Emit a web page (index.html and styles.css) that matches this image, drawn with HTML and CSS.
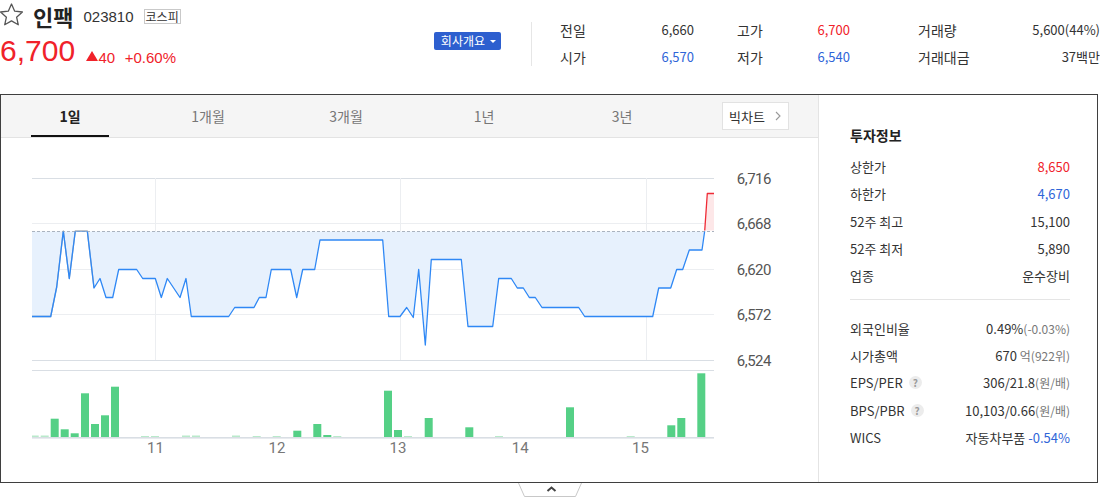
FILE: index.html
```html
<!DOCTYPE html>
<html>
<head>
  <meta charset="utf-8">
  <title>인팩 - 023810</title>
  <link rel="stylesheet" href="styles.css">
</head>
<body>
  <div class="page">
    <header class="stock-head">
      <div class="title-block">
        <div class="name-row">
          <svg class="star" viewBox="0 0 24 24">
            <polygon points="11.5,2 14.7,9.2 22.4,10 16.6,15.2 18.3,22.8 11.5,18.9 4.7,22.8 6.4,15.2 0.6,10 8.3,9.2"/>
          </svg>
          <h1 class="name">인팩</h1>
          <span class="code">023810</span>
          <span class="market">코스피</span>
        </div>
        <div class="price-row">
          <strong class="price">6,700</strong>
          <span class="diff"><i class="tri"></i>40</span>
          <span class="rate">+0.60%</span>
        </div>
      </div>
      <button class="company-btn">회사개요<i class="caret"></i></button>
      <span class="divider"></span>
      <div class="stats">
        <div class="stat"><span>전일</span><b>6,660</b></div>
        <div class="stat"><span>고가</span><b class="up">6,700</b></div>
        <div class="stat"><span>거래량</span><b>5,600(44%)</b></div>
        <div class="stat"><span>시가</span><b class="down">6,570</b></div>
        <div class="stat"><span>저가</span><b class="down">6,540</b></div>
        <div class="stat"><span>거래대금</span><b>37백만</b></div>
      </div>
    </header>

    <section class="chart-box">
      <div class="chart-main">
        <div class="tabs">
          <a class="tab on">1일</a>
          <a class="tab">1개월</a>
          <a class="tab">3개월</a>
          <a class="tab">1년</a>
          <a class="tab">3년</a>
          <a class="big-chart">빅차트<svg width="6" height="10" viewBox="0 0 6 10"><polyline points="1,1 5,5 1,9"/></svg></a>
        </div>

        <svg class="chart" width="817" height="345" viewBox="1 138 817 345">
          <defs>
            <clipPath id="below"><rect x="0" y="231.6" width="820" height="200"/></clipPath>
            <clipPath id="above"><rect x="0" y="100" width="820" height="130.4"/></clipPath>
          </defs>

          <!-- grid -->
          <line class="g-edge" x1="32" y1="178.5" x2="714" y2="178.5"/>
          <line class="g-line" x1="32" y1="223.5" x2="714" y2="223.5"/>
          <line class="g-line" x1="32" y1="269.5" x2="714" y2="269.5"/>
          <line class="g-line" x1="32" y1="314.5" x2="714" y2="314.5"/>
          <line class="g-edge" x1="32" y1="360.5" x2="714" y2="360.5"/>
          <line class="g-line" x1="155.5" y1="178" x2="155.5" y2="360"/>
          <line class="g-line" x1="400.5" y1="178" x2="400.5" y2="360"/>
          <line class="g-line" x1="646.5" y1="178" x2="646.5" y2="360"/>

          <!-- price area -->
          <polygon class="area-down" clip-path="url(#below)" points="32,316.5 50.7,316.5 56.7,287 63.3,231 69.3,278.5 75.3,231 87.3,231 94,288 100,278.5 106,297.5 112.7,297.5 118.7,269.5 136.7,269.5 142.7,278.5 155.3,278.5 161.3,297.5 167.3,278.5 180,297.5 186,278.5 191.3,316.5 228.7,316.5 234.7,307.5 254,307.5 259.3,297.5 266,297.5 271.3,269.5 290.7,269.5 296.7,297.5 302.7,269.5 314.7,269.5 320,240 382.7,240 388.7,316.5 400,316.5 406.7,307.5 413.3,317.5 418.7,269.5 425.3,345 431.3,259.5 461.3,259.5 468,326.5 492.7,326.5 498.7,278.5 511.3,278.5 517.3,288 523.3,288 529.3,297.5 535.3,297.5 542,307.5 578.7,307.5 584.7,316.5 652.7,316.5 658.7,288 670.7,288 676.7,269.5 682.7,269.5 689.3,250 702,250 704.7,231 707.3,193.5 714,193.5 714,231 32,231"/>
          <polygon class="area-up" clip-path="url(#above)" points="704.7,231 707.3,193.5 714,193.5 714,231"/>
          <line class="base" x1="32" y1="231.5" x2="714" y2="231.5"/>

          <polyline class="line-flat" points="32,316.5 50.7,316.5 56.7,287 63.3,231 69.3,278.5 75.3,231 87.3,231 94,288"/>
          <polyline class="line-down" clip-path="url(#below)" points="32,316.5 50.7,316.5 56.7,287 63.3,231 69.3,278.5 75.3,231 87.3,231 94,288 100,278.5 106,297.5 112.7,297.5 118.7,269.5 136.7,269.5 142.7,278.5 155.3,278.5 161.3,297.5 167.3,278.5 180,297.5 186,278.5 191.3,316.5 228.7,316.5 234.7,307.5 254,307.5 259.3,297.5 266,297.5 271.3,269.5 290.7,269.5 296.7,297.5 302.7,269.5 314.7,269.5 320,240 382.7,240 388.7,316.5 400,316.5 406.7,307.5 413.3,317.5 418.7,269.5 425.3,345 431.3,259.5 461.3,259.5 468,326.5 492.7,326.5 498.7,278.5 511.3,278.5 517.3,288 523.3,288 529.3,297.5 535.3,297.5 542,307.5 578.7,307.5 584.7,316.5 652.7,316.5 658.7,288 670.7,288 676.7,269.5 682.7,269.5 689.3,250 702,250 704.7,231 707.3,193.5 714,193.5"/>
          <polyline class="line-up" clip-path="url(#above)" points="702,250 704.7,231 707.3,193.5 714,193.5"/>

          <!-- y axis -->
          <text class="y-label" x="771" y="184">6,716</text>
          <text class="y-label" x="771" y="229">6,668</text>
          <text class="y-label" x="771" y="275">6,620</text>
          <text class="y-label" x="771" y="320">6,572</text>
          <text class="y-label" x="771" y="366">6,524</text>

          <!-- volume -->
          <line class="g-edge" x1="32" y1="370.5" x2="714" y2="370.5"/>
          <rect class="vol-lt" x="32" y="435.5" width="6.7" height="1.5"/>
          <rect class="vol-lt" x="40.7" y="435.5" width="8" height="1.5"/>
          <rect class="vol" x="50.7" y="418.7" width="8" height="18.3"/>
          <rect class="vol" x="60.7" y="429.3" width="8" height="7.7"/>
          <rect class="vol" x="70.7" y="433.3" width="8" height="3.7"/>
          <rect class="vol" x="81" y="393.3" width="8" height="43.7"/>
          <rect class="vol" x="91" y="424" width="8" height="13"/>
          <rect class="vol" x="101" y="415.3" width="8" height="21.7"/>
          <rect class="vol" x="111" y="386.7" width="8" height="50.3"/>
          <rect class="vol-lt" x="141" y="436" width="8" height="1"/>
          <rect class="vol-lt" x="151" y="436" width="8" height="1"/>
          <rect class="vol-lt" x="182" y="435.5" width="8" height="1.5"/>
          <rect class="vol-lt" x="192" y="435.5" width="8" height="1.5"/>
          <rect class="vol-lt" x="232" y="435.5" width="8" height="1.5"/>
          <rect class="vol-lt" x="252.7" y="436" width="8" height="1"/>
          <rect class="vol-lt" x="272.7" y="436" width="8" height="1"/>
          <rect class="vol" x="293.3" y="430.7" width="8" height="6.3"/>
          <rect class="vol" x="313.3" y="424" width="8" height="13"/>
          <rect class="vol" x="323.3" y="435" width="8" height="2"/>
          <rect class="vol-lt" x="333.3" y="436" width="8" height="1"/>
          <rect class="vol" x="384" y="390.7" width="8" height="46.3"/>
          <rect class="vol" x="394" y="430" width="8" height="7"/>
          <rect class="vol-lt" x="404" y="436" width="8" height="1"/>
          <rect class="vol" x="424.7" y="418" width="8" height="19"/>
          <rect class="vol" x="465.3" y="427.3" width="8" height="9.7"/>
          <rect class="vol-lt" x="495" y="436" width="8" height="1"/>
          <rect class="vol" x="566" y="407.3" width="8" height="29.7"/>
          <rect class="vol-lt" x="626.7" y="436" width="8" height="1"/>
          <rect class="vol" x="667.3" y="425.3" width="8" height="11.7"/>
          <rect class="vol" x="677.3" y="418" width="8" height="19"/>
          <rect class="vol" x="697.3" y="373.3" width="8" height="63.7"/>
          <rect class="axis" x="32" y="437" width="682" height="1.6"/>

          <!-- x axis -->
          <text class="x-label" x="155.5" y="453">11</text>
          <text class="x-label" x="277" y="453">12</text>
          <text class="x-label" x="398" y="453">13</text>
          <text class="x-label" x="520.3" y="453">14</text>
          <text class="x-label" x="640.5" y="453">15</text>
        </svg>
      </div>

      <aside class="invest">
        <h2>투자정보</h2>
        <div class="row"><span>상한가</span><em class="up">8,650</em></div>
        <div class="row"><span>하한가</span><em class="down">4,670</em></div>
        <div class="row"><span>52주 최고</span><em>15,100</em></div>
        <div class="row"><span>52주 최저</span><em>5,890</em></div>
        <div class="row"><span>업종</span><em>운수장비</em></div>
        <div class="sep"></div>
        <div class="row"><span>외국인비율</span><em>0.49%<small>(-0.03%)</small></em></div>
        <div class="row"><span>시가총액</span><em>670 <small>억(922위)</small></em></div>
        <div class="row"><span>EPS/PER<i class="help">?</i></span><em>306/21.8<small>(원/배)</small></em></div>
        <div class="row"><span>BPS/PBR<i class="help">?</i></span><em>10,103/0.66<small>(원/배)</small></em></div>
        <div class="row"><span>WICS</span><em>자동차부품 <b class="down">-0.54%</b></em></div>
      </aside>
    </section>

    <div class="handle">
      <svg width="64" height="15" viewBox="0 0 64 15">
        <path class="handle-edge" d="M0.5 0 L6.5 13.5 H57.5 L63.5 0"/>
        <polyline class="handle-arrow" points="29.5,8 33.5,4.5 37.5,8"/>
      </svg>
    </div>
  </div>
</body>
</html>
```

FILE: styles.css
```css
* {
  box-sizing: border-box;
}

body {
  margin: 0;
  font-family: "Noto Sans CJK KR", sans-serif;
  color: #333;
  background: #fff;
}

.page {
  width: 1100px;
}

.up {
  color: #f0222a;
}

.down {
  color: #2f65d8;
}

/* header */
.stock-head {
  display: flex;
  align-items: flex-start;
  height: 94px;
}

.title-block {
  width: 434px;
}

.name-row {
  display: flex;
  align-items: center;
  height: 32px;
}

.star {
  width: 24px;
  height: 24px;
  margin-top: -4px;
  fill: none;
  stroke: #555;
  stroke-width: 1.3;
  stroke-linejoin: round;
}

.name {
  margin: 0 0 0 9px;
  font-size: 22px;
  line-height: 32px;
  font-weight: bold;
  color: #222;
}

.code {
  margin-left: 10px;
  font: 15px "Liberation Sans", sans-serif;
  color: #333;
}

.market {
  margin-left: 10px;
  padding: 0 1px;
  border: 1px solid #c9c9c9;
  font-size: 12px;
  line-height: 13px;
  color: #333;
}

.price-row {
  margin-top: 4px;
  line-height: 30px;
  font-family: "Liberation Sans", sans-serif;
  color: #f0222a;
}

.price {
  font-size: 30px;
  font-weight: normal;
}

.diff,
.rate {
  font-size: 15px;
  vertical-align: -2px;
}

.diff {
  margin-left: 6px;
}

.rate {
  margin-left: 5px;
}

.tri {
  display: inline-block;
  width: 0;
  height: 0;
  margin-right: 1px;
  border-left: 6.5px solid transparent;
  border-right: 6.5px solid transparent;
  border-bottom: 10px solid #f0222a;
  vertical-align: 2px;
}

.company-btn {
  display: flex;
  align-items: center;
  height: 18px;
  margin-top: 32px;
  padding: 0 5px 0 7px;
  border: 0;
  border-radius: 2px;
  background: #2d5fcf;
  color: #fff;
  font-family: "Noto Sans CJK KR", sans-serif;
  font-size: 12px;
  line-height: 18px;
}

.caret {
  width: 0;
  height: 0;
  margin-left: 5px;
  border-left: 3px solid transparent;
  border-right: 3px solid transparent;
  border-top: 3px solid #fff;
}

.divider {
  width: 1px;
  height: 44px;
  margin: 22px 0 0 30px;
  background: #e6e6e6;
}

.stats {
  display: grid;
  grid-template-columns: 177px 181px 182px;
  grid-auto-rows: 27px;
  margin: 16px 0 0 28px;
}

.stat {
  display: flex;
  justify-content: space-between;
  align-items: center;
  font-size: 14px;
}

.stat:nth-child(3n+1) {
  padding-right: 43px;
}

.stat:nth-child(3n+2) {
  padding-right: 68px;
}

.stat b {
  font-weight: normal;
  font-size: 13px;
}

/* chart box */
.chart-box {
  display: flex;
  width: 1098px;
  height: 389px;
  border: 1px solid #3f3f3f;
}

.chart-main {
  width: 818px;
  border-right: 1px solid #e4e4e4;
}

.tabs {
  display: flex;
  align-items: center;
  height: 43px;
  background: #f5f5f5;
  border-bottom: 1px solid #e3e3e3;
}

.tab {
  align-self: flex-start;
  width: 78px;
  height: 42px;
  margin: 0 30px;
  padding-top: 2px;
  line-height: 38px;
  text-align: center;
  font-size: 14px;
  color: #777;
  border-bottom: 2px solid transparent;
}

.tab.on {
  color: #222;
  font-weight: bold;
  border-bottom-color: #111;
}

.big-chart {
  display: flex;
  align-items: center;
  height: 28px;
  margin-left: auto;
  margin-right: 29px;
  padding: 0 7px 0 6px;
  background: #fff;
  border: 1px solid #e2e2e2;
  font-size: 13px;
  color: #333;
}

.big-chart svg {
  margin-left: 10px;
  fill: none;
  stroke: #999;
  stroke-width: 1.1;
}

.chart {
  display: block;
}

.g-line {
  stroke: #eceef1;
  stroke-width: 1;
}

.g-edge {
  stroke: #d9dee4;
  stroke-width: 1;
}

.base {
  stroke: #aab3bf;
  stroke-width: 1;
  stroke-dasharray: 3 2;
}

.area-down {
  fill: #e7f1fd;
}

.area-up {
  fill: #fde7e8;
}

.line-flat,
.line-down,
.line-up {
  fill: none;
  stroke-width: 1.3;
  stroke-linejoin: round;
}

.line-flat {
  stroke: #a9b0b9;
}

.line-down {
  stroke: #2f88f5;
}

.line-up {
  stroke: #ef2b36;
}

.vol {
  fill: #55d086;
}

.vol-lt {
  fill: #b9eacb;
}

.axis {
  fill: #d9dee4;
}

.y-label {
  font-family: Roboto, sans-serif;
  font-size: 15px;
  letter-spacing: -0.5px;
  fill: #555;
  text-anchor: end;
}

.x-label {
  font-family: Roboto, sans-serif;
  font-size: 15px;
  fill: #777;
  text-anchor: middle;
}

/* investment panel */
.invest {
  flex: 1;
  padding: 30px 27px 0 31px;
}

.invest h2 {
  margin: 0 0 8px;
  font-size: 14px;
  line-height: 20px;
  font-weight: bold;
  color: #222;
}

.row {
  display: flex;
  justify-content: space-between;
  align-items: center;
  height: 27.3px;
  font-size: 13px;
  color: #333;
}

.row span {
  display: flex;
  align-items: center;
}

.row em {
  font-style: normal;
}

.row small {
  font-size: 12px;
  color: #777;
}

.row b {
  font-weight: normal;
}

.help {
  width: 13px;
  height: 13px;
  margin-left: 6px;
  border-radius: 50%;
  background: #ececec;
  color: #9a9a9a;
  font-style: normal;
  font-size: 10px;
  font-weight: bold;
  line-height: 13px;
  text-align: center;
}

.sep {
  margin: 10px 0 14px;
  border-top: 1px solid #e5e5e5;
}

/* bottom handle */
.handle {
  width: 1100px;
  text-align: center;
  line-height: 0;
}

.handle-edge {
  fill: #fff;
  stroke: #c8c8c8;
  stroke-width: 1;
}

.handle-arrow {
  fill: none;
  stroke: #444;
  stroke-width: 2;
}
```
